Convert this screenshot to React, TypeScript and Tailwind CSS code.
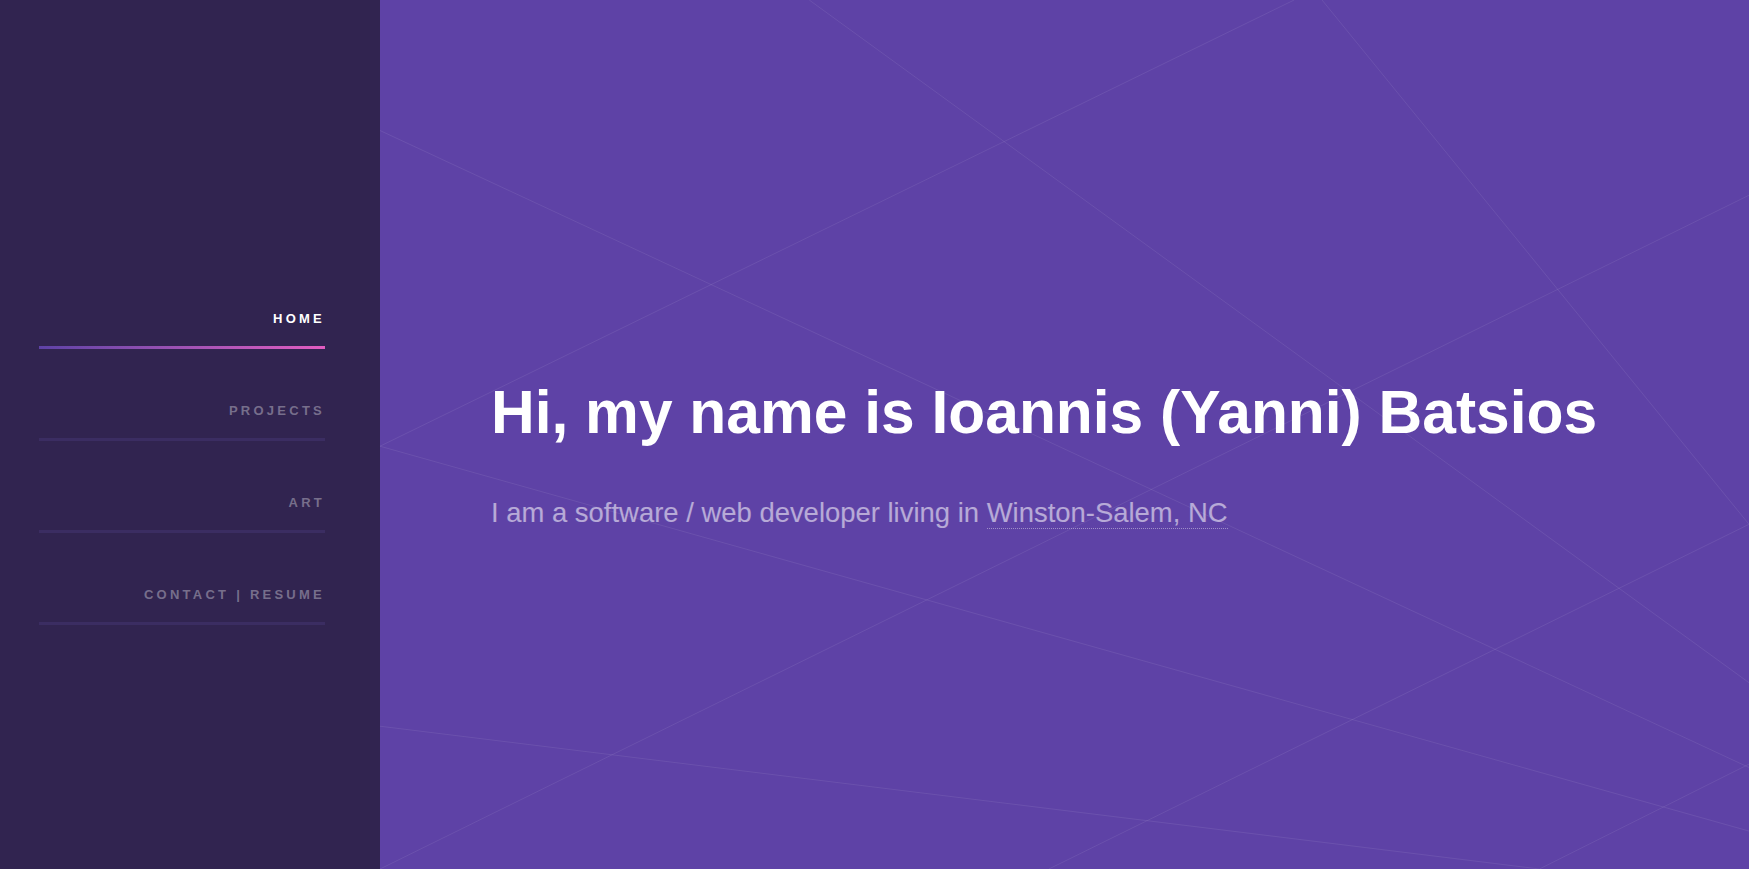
import React from 'react';

const navItems = [
  { label: 'Home', active: true },
  { label: 'Projects', active: false },
  { label: 'Art', active: false },
  { label: 'Contact | Resume', active: false },
];

// background lines, in a 1228x779 space stretched over the main panel
const lines: [number, number, number, number][] = [
  [385, 0, 1228, 612],
  [820, 0, 0, 400],
  [845, 0, 1228, 470],
  [0, 117, 1228, 688],
  [1228, 175, 0, 779],
  [0, 400, 1228, 745],
  [0, 651, 1040, 779],
  [1228, 470, 600, 779],
  [1228, 685, 1040, 779],
];

function Sidebar() {
  return (
    <aside className="w-[380px] shrink-0 bg-[#312450] pt-[311px] pl-[39px] pr-[55px]">
      <nav>
        {navItems.map((item) => (
          <a key={item.label} href="#" className="block pt-[54px] first:pt-0">
            <div
              className={`text-right text-[13px] leading-[16px] font-bold uppercase tracking-[0.25em] ${
                item.active ? 'text-white' : 'text-white/35'
              }`}
            >
              {item.label}
            </div>
            <div
              className={`mt-[19px] h-[3px] ${
                item.active ? 'bg-gradient-to-r from-[#5e42a6] to-[#e25cc0]' : 'bg-[#3b2d62]'
              }`}
            />
          </a>
        ))}
      </nav>
    </aside>
  );
}

export default function App() {
  return (
    <div className="flex h-[869px] w-full overflow-hidden font-['Liberation_Sans',Arial,sans-serif]">
      <Sidebar />
      <main className="relative flex-1 bg-[#5e42a6]">
        <svg
          className="absolute inset-0 h-full w-full"
          viewBox="0 0 1228 779"
          preserveAspectRatio="none"
        >
          {lines.map(([x1, y1, x2, y2], i) => (
            <line
              key={i}
              x1={x1}
              y1={y1}
              x2={x2}
              y2={y2}
              stroke="rgba(255,255,255,0.08)"
              strokeWidth={1}
              vectorEffect="non-scaling-stroke"
            />
          ))}
        </svg>
        <div className="relative pt-[379px] pl-[111px]">
          <h1 className="text-[60.5px] leading-[66px] font-bold text-white">
            Hi, my name is Ioannis (Yanni) Batsios
          </h1>
          <p className="mt-[45px] text-[27.45px] leading-[45px] text-white/55">
            I am a software / web developer living in{' '}
            <span className="border-b border-dotted border-white/40">Winston-Salem, NC</span>
          </p>
        </div>
      </main>
    </div>
  );
}
